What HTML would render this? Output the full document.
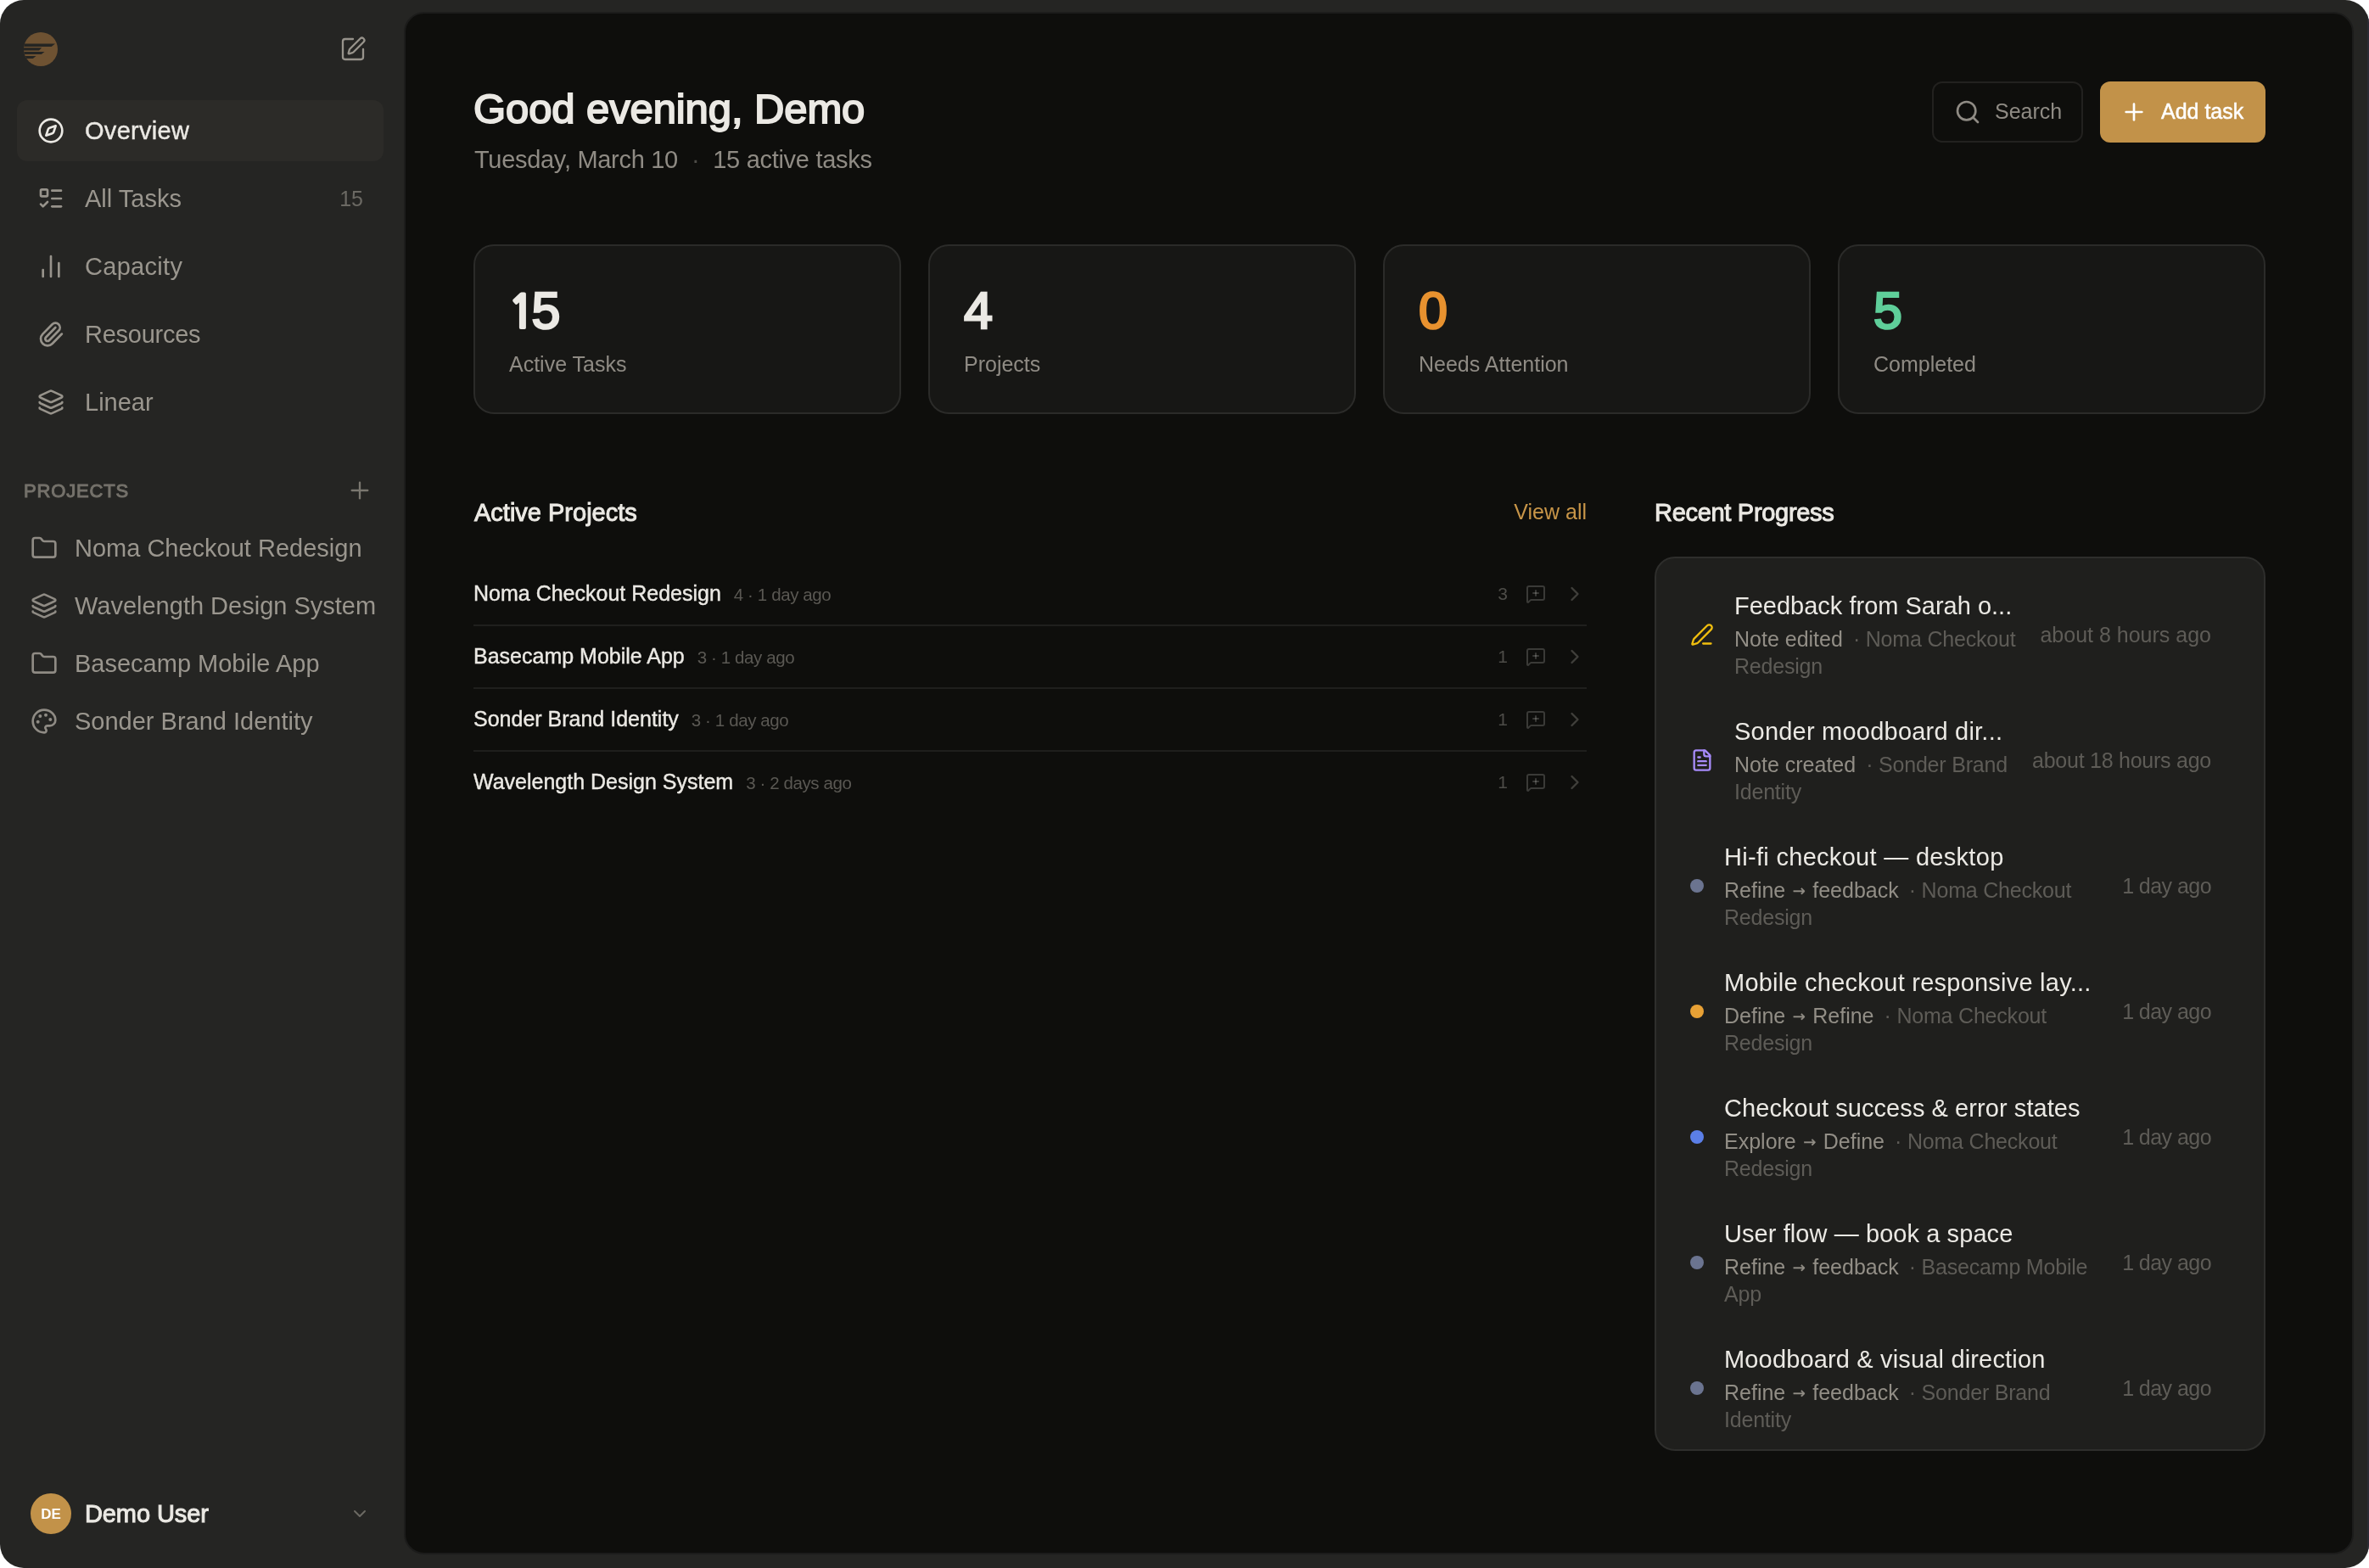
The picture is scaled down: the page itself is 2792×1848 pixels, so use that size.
<!DOCTYPE html>
<html lang="en">
<head>
<meta charset="utf-8">
<title>Overview</title>
<style>
*{box-sizing:border-box;margin:0;padding:0}
html,body{width:2792px;height:1848px;overflow:hidden;background:#fff}
body{font-family:"Liberation Sans",sans-serif;color:#ebe9e4;-webkit-font-smoothing:antialiased}
#win{will-change:transform;position:absolute;left:0;top:0;width:2792px;height:1848px;background:#252523;border-radius:28px;overflow:hidden}
.t{position:absolute;white-space:nowrap;line-height:1}
svg{display:block}
.ic{position:absolute;fill:none;stroke:currentColor;stroke-linecap:round;stroke-linejoin:round}
/* sidebar */
.nav-active{position:absolute;left:20px;top:118px;width:432px;height:72px;border-radius:12px;background:#2c2b28}
.nav{font-size:29px;left:100px;color:#9a968e}
.nav.on{color:#ebe9e4;letter-spacing:0.3px;-webkit-text-stroke:0.4px #ebe9e4}
.navic{left:44px;width:32px;height:32px;stroke-width:2;color:#97938b}
.proj{font-size:29px;left:88px;color:#9a968e}
.projic{left:36px;width:32px;height:32px;stroke-width:2;color:#8f8b84}
/* main */
#main{position:absolute;left:476px;top:14px;width:2298px;height:1818px;border:2px solid #1c1c1b;border-radius:24px;background:#0e0e0c}
.card{position:absolute;top:288px;width:504px;height:200px;border:2px solid #2b2b29;border-radius:24px;background:#171715}
.num{font-size:61px;top:335.5px;-webkit-text-stroke:2.6px currentColor}
.lbl{font-size:25px;color:#8f8b84;top:417px}
.sep{position:absolute;left:558px;width:1312px;height:2px;background:#1f1f1d}
.pname{font-size:25px;left:558px;color:#ebe9e4;-webkit-text-stroke:0.4px #ebe9e4}
.pmeta{font-size:20.5px;letter-spacing:-0.4px;-webkit-text-stroke:0;color:#5a5853}
.pcnt{font-size:21px;color:#4d4c48}
.msg{left:1798px;width:24px;height:24px;stroke-width:2;color:rgba(235,233,228,.2)}
.chev{left:1842px;width:28px;height:28px;stroke-width:2;color:#403f3b}
#rp{position:absolute;left:1950px;top:656px;width:720px;height:1054px;border:2px solid #2e2e2c;border-radius:24px;background:#1f1f1d;overflow:hidden}
.it{font-size:29px;color:#ebe9e4}
.is{font-size:25px;color:#928e86;line-height:32px}
.is i{font-style:normal;color:#5e5c57;letter-spacing:-0.2px}
.ar{font-family:"DejaVu Sans",sans-serif;font-size:18px;line-height:0;letter-spacing:0;position:relative;top:-2px;margin:0 1.5px;-webkit-text-stroke:0.3px currentColor}
.tm{font-size:25px;color:#5e5c57;letter-spacing:-0.25px}
.dot{position:absolute;left:1992px;width:16px;height:16px;border-radius:50%}
</style>
</head>
<body>
<div id="win">
<div style="position:absolute;left:2790px;top:0;width:2px;height:1848px;background:#2b2a33"></div>

<!-- ============ SIDEBAR ============ -->
<svg class="ic" style="left:28px;top:38px;width:40px;height:40px;stroke:none" viewBox="0 0 40 40">
  <defs><clipPath id="lc"><circle cx="20" cy="20" r="20"/></clipPath></defs>
  <circle cx="20" cy="20" r="20" fill="#6e5232"/>
  <g clip-path="url(#lc)" fill="#252523">
    <polygon points="-2,13.4 37,13.4 32.6,16.9 -2,16.9"/>
    <polygon points="-2,18.2 21.2,18.2 18,21.5 -2,21.5"/>
    <polygon points="-2,23 24.5,23 20.8,26 -2,26"/>
    <polygon points="-2,28 14.5,28 10.8,31 -2,31"/>
  </g>
</svg>
<svg class="ic" style="left:400px;top:42px;width:32px;height:32px;stroke-width:1.75;color:#97938b" viewBox="0 0 24 24"><path d="M12 3H5a2 2 0 0 0-2 2v14a2 2 0 0 0 2 2h14a2 2 0 0 0 2-2v-7"/><path d="M18.375 2.625a1 1 0 0 1 3 3l-9.013 9.014a2 2 0 0 1-.853.505l-2.873.84a.5.5 0 0 1-.62-.62l.84-2.873a2 2 0 0 1 .506-.852z"/></svg>

<div class="nav-active"></div>
<svg class="ic navic" style="top:138px;color:#ebe9e4" viewBox="0 0 24 24"><path d="m16.24 7.76-1.804 5.411a2 2 0 0 1-1.265 1.265L7.76 16.24l1.804-5.411a2 2 0 0 1 1.265-1.265z"/><circle cx="12" cy="12" r="10"/></svg>
<div class="t nav on" id="n1" style="top:140px">Overview</div>

<svg class="ic navic" style="top:218px" viewBox="0 0 24 24"><rect x="3" y="4" width="6" height="6" rx="1"/><path d="m3 17 2 2 4-4"/><path d="M13 5h8"/><path d="M13 12h8"/><path d="M13 19h8"/></svg>
<div class="t nav" id="n2" style="top:220px">All Tasks</div>
<div class="t" id="n2c" style="font-size:25px;color:#6b6963;right:2364px;top:222px">15</div>

<svg class="ic navic" style="top:298px" viewBox="0 0 24 24"><path d="M5 21v-6"/><path d="M12 21V3"/><path d="M19 21V9"/></svg>
<div class="t nav" id="n3" style="top:300px;letter-spacing:0.3px">Capacity</div>

<svg class="ic navic" style="top:378px" viewBox="0 0 24 24"><path d="m16 6-8.414 8.586a2 2 0 0 0 2.829 2.829l8.414-8.586a4 4 0 1 0-5.657-5.657l-8.379 8.551a6 6 0 1 0 8.485 8.485l8.379-8.551"/></svg>
<div class="t nav" id="n4" style="top:380px;letter-spacing:-0.25px">Resources</div>

<svg class="ic navic" style="top:458px" viewBox="0 0 24 24"><path d="M12.83 2.18a2 2 0 0 0-1.66 0L2.6 6.08a1 1 0 0 0 0 1.83l8.58 3.91a2 2 0 0 0 1.66 0l8.58-3.9a1 1 0 0 0 0-1.83z"/><path d="M2 12a1 1 0 0 0 .58.91l8.6 3.91a2 2 0 0 0 1.65 0l8.58-3.9A1 1 0 0 0 22 12"/><path d="M2 17a1 1 0 0 0 .58.91l8.6 3.91a2 2 0 0 0 1.65 0l8.58-3.9A1 1 0 0 0 22 17"/></svg>
<div class="t nav" id="n5" style="top:460px">Linear</div>

<div class="t" id="plabel" style="left:28px;top:568px;font-size:22px;-webkit-text-stroke:1px #75726b;letter-spacing:0.85px;color:#75726b">PROJECTS</div>
<svg class="ic" style="left:408px;top:562px;width:32px;height:32px;stroke-width:1.75;color:#7a776f" viewBox="0 0 24 24"><path d="M5 12h14"/><path d="M12 5v14"/></svg>

<svg class="ic projic" style="top:630px" viewBox="0 0 24 24"><path d="M20 20a2 2 0 0 0 2-2V8a2 2 0 0 0-2-2h-7.9a2 2 0 0 1-1.69-.9L9.6 3.9A2 2 0 0 0 7.93 3H4a2 2 0 0 0-2 2v13a2 2 0 0 0 2 2Z"/></svg>
<div class="t proj" id="p1" style="top:632px">Noma Checkout Redesign</div>
<svg class="ic projic" style="top:698px" viewBox="0 0 24 24"><path d="M12.83 2.18a2 2 0 0 0-1.66 0L2.6 6.08a1 1 0 0 0 0 1.83l8.58 3.91a2 2 0 0 0 1.66 0l8.58-3.9a1 1 0 0 0 0-1.83z"/><path d="M2 12a1 1 0 0 0 .58.91l8.6 3.91a2 2 0 0 0 1.65 0l8.58-3.9A1 1 0 0 0 22 12"/><path d="M2 17a1 1 0 0 0 .58.91l8.6 3.91a2 2 0 0 0 1.65 0l8.58-3.9A1 1 0 0 0 22 17"/></svg>
<div class="t proj" id="p2" style="top:700px">Wavelength Design System</div>
<svg class="ic projic" style="top:766px" viewBox="0 0 24 24"><path d="M20 20a2 2 0 0 0 2-2V8a2 2 0 0 0-2-2h-7.9a2 2 0 0 1-1.69-.9L9.6 3.9A2 2 0 0 0 7.93 3H4a2 2 0 0 0-2 2v13a2 2 0 0 0 2 2Z"/></svg>
<div class="t proj" id="p3" style="top:768px">Basecamp Mobile App</div>
<svg class="ic projic" style="top:834px" viewBox="0 0 24 24"><path d="M12 22a1 1 0 0 1 0-20 10 9 0 0 1 10 9 5 5 0 0 1-5 5h-2.25a1.75 1.75 0 0 0-1.4 2.8l.3.4a1.75 1.75 0 0 1-1.4 2.8z"/><circle cx="13.5" cy="6.5" r="1.5" fill="currentColor" stroke="none"/><circle cx="17.5" cy="10.5" r="1.5" fill="currentColor" stroke="none"/><circle cx="6.5" cy="12.5" r="1.5" fill="currentColor" stroke="none"/><circle cx="8.5" cy="7.5" r="1.5" fill="currentColor" stroke="none"/></svg>
<div class="t proj" id="p4" style="top:836px">Sonder Brand Identity</div>

<div style="position:absolute;left:36px;top:1760px;width:48px;height:48px;border-radius:50%;background:#c29249"></div>
<div class="t" id="av" style="left:36px;width:48px;text-align:center;top:1776px;font-size:17px;font-weight:700;color:#fff">DE</div>
<div class="t" id="uname" style="left:100px;top:1770px;font-size:29px;-webkit-text-stroke:1px #ebe9e4;letter-spacing:-0.1px;color:#ebe9e4">Demo User</div>
<svg class="ic" style="left:412px;top:1772px;width:24px;height:24px;stroke-width:2;color:#6b6963" viewBox="0 0 24 24"><path d="m6 9 6 6 6-6"/></svg>

<!-- ============ MAIN ============ -->
<div id="main"></div>

<!-- header -->
<div class="t" id="h1" style="left:558px;top:104px;font-size:49px;letter-spacing:-0.1px;-webkit-text-stroke:1.9px #ebe9e4;color:#ebe9e4">Good evening, Demo</div>
<div class="t" id="h2" style="left:559px;top:174px;font-size:29px;letter-spacing:-0.3px;color:#8f8b84">Tuesday, March 10<span id="h2d" style="color:#4d4c48;margin:0 16px">·</span>15 active tasks</div>

<div style="position:absolute;left:2277px;top:96px;width:178px;height:72px;border:2px solid #22211f;border-radius:12px"></div>
<svg class="ic" style="left:2303px;top:116px;width:32px;height:32px;stroke-width:2;color:#8f8b84" viewBox="0 0 24 24"><circle cx="11" cy="11" r="8"/><path d="m21 21-4.3-4.3"/></svg>
<div class="t" id="b1" style="left:2351px;top:119px;font-size:25px;color:#8f8b84">Search</div>
<div style="position:absolute;left:2475px;top:96px;width:195px;height:72px;border-radius:12px;background:#c29249"></div>
<svg class="ic" style="left:2499px;top:116px;width:32px;height:32px;stroke-width:2;color:#fff" viewBox="0 0 24 24"><path d="M5 12h14"/><path d="M12 5v14"/></svg>
<div class="t" id="b2" style="left:2547px;top:119px;font-size:25px;color:#fff;-webkit-text-stroke:0.5px #fff">Add task</div>

<!-- stat cards -->
<div class="card" style="left:558px"></div>
<div class="t num" id="s1" style="left:596px"><span id="s1a" style="font-family:NanumGothic,'Liberation Sans',sans-serif;font-weight:700;font-size:53.5px;-webkit-text-stroke:2.2px currentColor;margin-left:2.5px;margin-right:-4.5px">1</span><span id="s1b">5</span></div>
<div class="t lbl" id="l1" style="left:600px">Active Tasks</div>
<div class="card" style="left:1094px"></div>
<div class="t num" id="s2" style="left:1136px">4</div>
<div class="t lbl" id="l2" style="left:1136px">Projects</div>
<div class="card" style="left:1630px"></div>
<div class="t num" id="s3" style="left:1672px;color:#e8922f">0</div>
<div class="t lbl" id="l3" style="left:1672px">Needs Attention</div>
<div class="card" style="left:2166px"></div>
<div class="t num" id="s4" style="left:2208px;color:#5fcf9a">5</div>
<div class="t lbl" id="l4" style="left:2208px">Completed</div>

<!-- active projects -->
<div class="t" id="ap" style="left:559px;top:590px;font-size:29px;letter-spacing:0px;-webkit-text-stroke:1px #ebe9e4;color:#ebe9e4">Active Projects</div>
<div class="t" id="va" style="right:922px;top:591px;font-size:25px;color:#c89548">View all</div>
<div class="t pname" id="r0" style="top:687px">Noma Checkout Redesign<span class="pmeta" id="rm0" style="margin-left:15px">4 · 1 day ago</span></div>
<div class="t pcnt" id="rc0" style="right:1015px;top:689px">3</div>
<svg class="ic msg" style="top:688px" viewBox="0 0 24 24"><path d="M22 17a2 2 0 0 1-2 2H6.828a2 2 0 0 0-1.414.586l-2.202 2.202A.71.71 0 0 1 2 21.286V5a2 2 0 0 1 2-2h16a2 2 0 0 1 2 2z"/><path d="M12 8v6"/><path d="M9 11h6"/></svg>
<svg class="ic chev" style="top:686px" viewBox="0 0 24 24"><path d="m9 18 6-6-6-6"/></svg>
<div class="sep" style="top:736px"></div>
<div class="t pname" id="r1" style="top:761px">Basecamp Mobile App<span class="pmeta" id="rm1" style="margin-left:15px">3 · 1 day ago</span></div>
<div class="t pcnt" id="rc1" style="right:1015px;top:763px">1</div>
<svg class="ic msg" style="top:762px" viewBox="0 0 24 24"><path d="M22 17a2 2 0 0 1-2 2H6.828a2 2 0 0 0-1.414.586l-2.202 2.202A.71.71 0 0 1 2 21.286V5a2 2 0 0 1 2-2h16a2 2 0 0 1 2 2z"/><path d="M12 8v6"/><path d="M9 11h6"/></svg>
<svg class="ic chev" style="top:760px" viewBox="0 0 24 24"><path d="m9 18 6-6-6-6"/></svg>
<div class="sep" style="top:810px"></div>
<div class="t pname" id="r2" style="top:835px">Sonder Brand Identity<span class="pmeta" id="rm2" style="margin-left:15px">3 · 1 day ago</span></div>
<div class="t pcnt" id="rc2" style="right:1015px;top:837px">1</div>
<svg class="ic msg" style="top:836px" viewBox="0 0 24 24"><path d="M22 17a2 2 0 0 1-2 2H6.828a2 2 0 0 0-1.414.586l-2.202 2.202A.71.71 0 0 1 2 21.286V5a2 2 0 0 1 2-2h16a2 2 0 0 1 2 2z"/><path d="M12 8v6"/><path d="M9 11h6"/></svg>
<svg class="ic chev" style="top:834px" viewBox="0 0 24 24"><path d="m9 18 6-6-6-6"/></svg>
<div class="sep" style="top:884px"></div>
<div class="t pname" id="r3" style="top:909px">Wavelength Design System<span class="pmeta" id="rm3" style="margin-left:15px">3 · 2 days ago</span></div>
<div class="t pcnt" id="rc3" style="right:1015px;top:911px">1</div>
<svg class="ic msg" style="top:910px" viewBox="0 0 24 24"><path d="M22 17a2 2 0 0 1-2 2H6.828a2 2 0 0 0-1.414.586l-2.202 2.202A.71.71 0 0 1 2 21.286V5a2 2 0 0 1 2-2h16a2 2 0 0 1 2 2z"/><path d="M12 8v6"/><path d="M9 11h6"/></svg>
<svg class="ic chev" style="top:908px" viewBox="0 0 24 24"><path d="m9 18 6-6-6-6"/></svg>

<!-- recent progress -->
<div class="t" id="rph" style="left:1950px;top:590px;font-size:29px;letter-spacing:-0.3px;-webkit-text-stroke:1px #ebe9e4;color:#ebe9e4">Recent Progress</div>
<div id="rp"></div>
<svg class="ic" style="left:1992px;top:734px;width:28px;height:28px;stroke-width:2;color:#f0be0e" viewBox="0 0 24 24"><path d="M13 21h8"/><path d="M21.174 6.812a1 1 0 0 0-3.986-3.987L3.842 16.174a2 2 0 0 0-.5.83l-1.321 4.352a.5.5 0 0 0 .623.622l4.353-1.32a2 2 0 0 0 .83-.497z"/></svg>
<div class="t it" id="it0" style="left:2044px;top:700px">Feedback from Sarah o...</div>
<div class="t is" id="is0" style="left:2044px;top:737px"><span id="isa0">Note edited</span><i id="isb0" style="margin-left:12px">· Noma Checkout</i><br><i>Redesign</i></div>
<div class="t tm" id="tm0" style="letter-spacing:0;right:186px;top:736px">about 8 hours ago</div>
<svg class="ic" style="left:1992px;top:882px;width:28px;height:28px;stroke-width:2;color:#a78bfa" viewBox="0 0 24 24"><path d="M15 2H6a2 2 0 0 0-2 2v16a2 2 0 0 0 2 2h12a2 2 0 0 0 2-2V7Z"/><path d="M14 2v4a2 2 0 0 0 2 2h4"/><path d="M10 9H8"/><path d="M16 13H8"/><path d="M16 17H8"/></svg>
<div class="t it" id="it1" style="letter-spacing:0.22px;left:2044px;top:848px">Sonder moodboard dir...</div>
<div class="t is" id="is1" style="left:2044px;top:885px"><span id="isa1">Note created</span><i id="isb1" style="margin-left:12px">· Sonder Brand</i><br><i>Identity</i></div>
<div class="t tm" id="tm1" style="right:186px;top:884px">about 18 hours ago</div>
<div class="dot" style="top:1036px;background:#6b7490"></div>
<div class="t it" id="it2" style="letter-spacing:0.3px;left:2032px;top:996px">Hi-fi checkout — desktop</div>
<div class="t is" id="is2" style="left:2032px;top:1033px"><span id="isa2">Refine <span class="ar">→</span> feedback</span><i id="isb2" style="margin-left:12px">· Noma Checkout</i><br><i>Redesign</i></div>
<div class="t tm" id="tm2" style="letter-spacing:-0.55px;right:186px;top:1032px">1 day ago</div>
<div class="dot" style="top:1184px;background:#e8a135"></div>
<div class="t it" id="it3" style="letter-spacing:0.23px;left:2032px;top:1144px">Mobile checkout responsive lay...</div>
<div class="t is" id="is3" style="left:2032px;top:1181px"><span id="isa3">Define <span class="ar">→</span> Refine</span><i id="isb3" style="margin-left:12px">· Noma Checkout</i><br><i>Redesign</i></div>
<div class="t tm" id="tm3" style="letter-spacing:-0.55px;right:186px;top:1180px">1 day ago</div>
<div class="dot" style="top:1332px;background:#5b7fe8"></div>
<div class="t it" id="it4" style="letter-spacing:0.07px;left:2032px;top:1292px">Checkout success &amp; error states</div>
<div class="t is" id="is4" style="left:2032px;top:1329px"><span id="isa4">Explore <span class="ar">→</span> Define</span><i id="isb4" style="margin-left:12px">· Noma Checkout</i><br><i>Redesign</i></div>
<div class="t tm" id="tm4" style="letter-spacing:-0.55px;right:186px;top:1328px">1 day ago</div>
<div class="dot" style="top:1480px;background:#6b7490"></div>
<div class="t it" id="it5" style="letter-spacing:0.08px;left:2032px;top:1440px">User flow — book a space</div>
<div class="t is" id="is5" style="left:2032px;top:1477px"><span id="isa5">Refine <span class="ar">→</span> feedback</span><i id="isb5" style="margin-left:12px">· Basecamp Mobile</i><br><i>App</i></div>
<div class="t tm" id="tm5" style="letter-spacing:-0.55px;right:186px;top:1476px">1 day ago</div>
<div class="dot" style="top:1628px;background:#6b7490"></div>
<div class="t it" id="it6" style="letter-spacing:0.16px;left:2032px;top:1588px">Moodboard &amp; visual direction</div>
<div class="t is" id="is6" style="left:2032px;top:1625px"><span id="isa6">Refine <span class="ar">→</span> feedback</span><i id="isb6" style="margin-left:12px">· Sonder Brand</i><br><i>Identity</i></div>
<div class="t tm" id="tm6" style="letter-spacing:-0.55px;right:186px;top:1624px">1 day ago</div>

</div>
</body>
</html>
